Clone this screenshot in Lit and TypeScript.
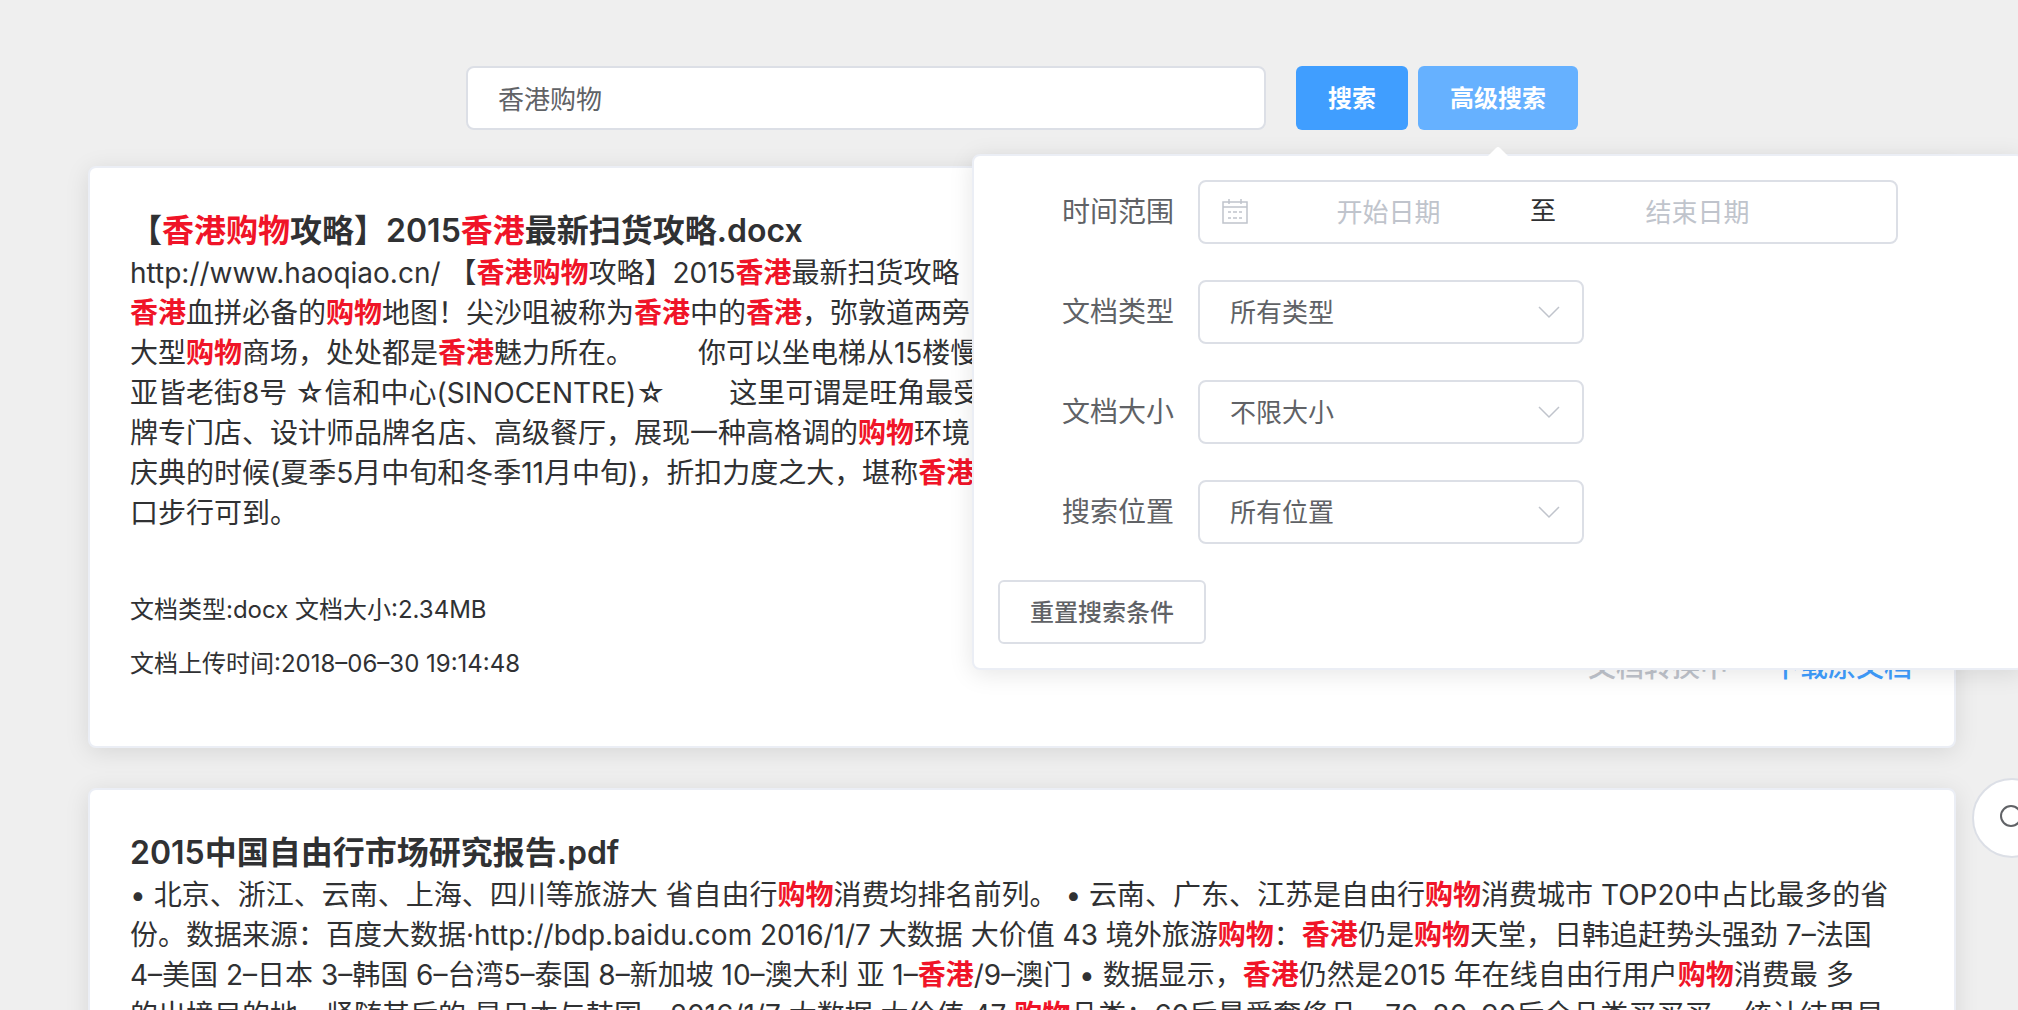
import { LitElement, html, css, nothing } from "lit";
import { customElement, property } from "lit/decorators.js";

const KEYWORDS = /(香港|购物)/;

interface Doc {
  title: string;
  lines: string[];
  meta?: { type: string; size: string; uploaded: string };
}

const DOCS: Doc[] = [
  {
    title: "【香港购物攻略】2015香港最新扫货攻略.docx",
    lines: [
      "http://www.haoqiao.cn/ 【香港购物攻略】2015香港最新扫货攻略",
      "香港血拼必备的购物地图！尖沙咀被称为香港中的香港，弥敦道两旁",
      "大型购物商场，处处都是香港魅力所在。 \u3000\u3000你可以坐电梯从15楼慢",
      "亚皆老街8号 ☆信和中心(SINOCENTRE)☆ \u3000\u3000这里可谓是旺角最受",
      "牌专门店、设计师品牌名店、高级餐厅，展现一种高格调的购物环境",
      "庆典的时候(夏季5月中旬和冬季11月中旬)，折扣力度之大，堪称香港",
      "口步行可到。",
    ],
    meta: { type: "docx", size: "2.34MB", uploaded: "2018–06–30 19:14:48" },
  },
  {
    title: "2015中国自由行市场研究报告.pdf",
    lines: [
      "• 北京、浙江、云南、上海、四川等旅游大 省自由行购物消费均排名前列。 • 云南、广东、江苏是自由行购物消费城市 TOP20中占比最多的省",
      "份。数据来源：百度大数据·http://bdp.baidu.com 2016/1/7 大数据 大价值 43 境外旅游购物：香港仍是购物天堂，日韩追赶势头强劲 7–法国",
      "4–美国 2–日本 3–韩国 6–台湾5–泰国 8–新加坡 10–澳大利 亚 1–香港/9–澳门 • 数据显示，香港仍然是2015 年在线自由行用户购物消费最 多",
      "的出境目的地，紧随其后的 是日本与韩国。2016/1/7 大数据 大价值 47 购物品类：60后最爱奢侈品，70–80–90后全品类买买买 • 统计结果显",
    ],
  },
];

const highlight = (text: string) =>
  text.split(KEYWORDS).map((part) => (KEYWORDS.test(part) ? html`<em class="hit">${part}</em>` : part));

@customElement("result-card")
class ResultCard extends LitElement {
  @property({ attribute: false }) doc!: Doc;

  static styles = css`
    :host {
      display: block;
      box-sizing: border-box;
      padding: 41px 40px 40px;
      border: 2px solid #ebeef5;
      border-radius: 8px;
      background: #fff;
      box-shadow: 0 4px 24px rgba(0, 0, 0, 0.1);
      color: #303133;
    }
    .title {
      margin: 0;
      font-size: 32px;
      line-height: 44px;
      font-weight: 600;
      white-space: nowrap;
    }
    .snippet {
      margin: 0;
      font-size: 28px;
      line-height: 40px;
    }
    .line {
      display: block;
      white-space: pre;
    }
    .hit {
      color: #f01428;
      font-style: normal;
      font-weight: 700;
    }
    .foot {
      display: flex;
      justify-content: space-between;
      align-items: flex-end;
      margin-top: 50px;
      padding: 0 2px 15px 0;
    }
    .meta {
      margin: 0;
      font-size: 24px;
      line-height: 54px;
    }
    .actions {
      display: flex;
      gap: 44px;
      font-size: 28px;
      line-height: 48px;
      font-weight: 500;
    }
    .pending {
      color: #c0c4cc;
    }
    .download {
      color: #409eff;
      text-decoration: none;
    }
  `;

  render() {
    const d = this.doc;
    return html`
      <h2 class="title">${highlight(d.title)}</h2>
      <p class="snippet">${d.lines.map((l) => html`<span class="line">${highlight(l)}</span>`)}</p>
      ${d.meta
        ? html`<div class="foot">
            <div>
              <p class="meta">文档类型:${d.meta.type} 文档大小:${d.meta.size}</p>
              <p class="meta">文档上传时间:${d.meta.uploaded}</p>
            </div>
            <div class="actions">
              <span class="pending">文档转换中</span>
              <a class="download" href="#">下载原文档</a>
            </div>
          </div>`
        : nothing}
    `;
  }
}

@customElement("advanced-panel")
class AdvancedPanel extends LitElement {
  static styles = css`
    :host {
      display: flex;
      flex-direction: column;
      gap: 36px;
      box-sizing: border-box;
      padding: 24px;
      border: 2px solid #ebeef5;
      border-radius: 8px;
      background: #fff;
      box-shadow: 0 4px 24px rgba(0, 0, 0, 0.1);
      color: #606266;
    }
    .arrow {
      position: absolute;
      left: 50%;
      top: -10px;
      width: 24px;
      height: 12px;
      margin-left: -12px;
      fill: #fff;
    }
    .row {
      display: flex;
      align-items: center;
    }
    .label {
      flex: none;
      box-sizing: border-box;
      width: 200px;
      padding-right: 24px;
      text-align: right;
      font-size: 28px;
      line-height: 64px;
    }
    .range,
    .select {
      box-sizing: border-box;
      height: 64px;
      border: 2px solid #dcdfe6;
      border-radius: 8px;
      background: #fff;
    }
    .range {
      flex: 0 1 700px;
      min-width: 0;
      display: flex;
      align-items: center;
      padding: 0 62px 0 20px;
      font-size: 26px;
    }
    .calendar {
      flex: none;
      width: 32px;
      height: 28px;
      fill: none;
      stroke: #c0c4cc;
      stroke-width: 1.5;
    }
    .date {
      flex: 1;
      width: 0;
      min-width: 0;
      box-sizing: border-box;
      height: 56px;
      padding: 0;
      border: 0;
      outline: 0;
      background: none;
      font: inherit;
      text-align: center;
      color: #606266;
    }
    .date::placeholder {
      color: #c0c4cc;
    }
    .to {
      flex: none;
      width: 36px;
      text-align: center;
      color: #303133;
      line-height: 60px;
      padding-bottom: 2px;
    }
    .picker {
      position: relative;
      flex: 0 1 386px;
    }
    .select {
      display: block;
      width: 100%;
      padding: 0 60px 0 30px;
      appearance: none;
      outline: 0;
      font: inherit;
      font-size: 26px;
      color: #606266;
    }
    .chevron {
      position: absolute;
      right: 23px;
      top: 25px;
      width: 24px;
      height: 14px;
      fill: none;
      stroke: #c0c4cc;
      stroke-width: 1.5;
      pointer-events: none;
    }
    .reset {
      align-self: flex-start;
      height: 64px;
      padding: 0 30px 4px;
      border: 2px solid #dcdfe6;
      border-radius: 6px;
      background: #fff;
      font: inherit;
      font-size: 24px;
      font-weight: 500;
      color: #606266;
    }
  `;

  private picker(id: string, label: string, value: string) {
    return html`
      <div class="row">
        <label class="label" for=${id}>${label}</label>
        <div class="picker">
          <select class="select" id=${id}>
            <option>${value}</option>
          </select>
          <svg class="chevron" viewBox="0 0 24 14" aria-hidden="true"><path d="M2 2 L12 12 L22 2" /></svg>
        </div>
      </div>
    `;
  }

  render() {
    return html`
      <svg class="arrow" viewBox="0 0 24 12" aria-hidden="true"><path d="M0 12 L10 2 Q12 0 14 2 L24 12 Z" /></svg>
      <div class="row">
        <label class="label" for="start">时间范围</label>
        <div class="range">
          <svg class="calendar" viewBox="0 0 32 28" aria-hidden="true">
            <path d="M3 4 H27 V25 H3 Z M3 9 H27 M9 1 V6 M21 1 V6" />
            <path d="M8 14 H11 M13 14 H17 M19 14 H22 M8 20 H11 M13 20 H17 M19 20 H22" />
          </svg>
          <input class="date" id="start" type="text" placeholder="开始日期" />
          <span class="to">至</span>
          <input class="date" type="text" aria-label="结束日期" placeholder="结束日期" />
        </div>
      </div>
      ${this.picker("type", "文档类型", "所有类型")} ${this.picker("size", "文档大小", "不限大小")}
      ${this.picker("place", "搜索位置", "所有位置")}
      <button class="reset" type="button">重置搜索条件</button>
    `;
  }
}

@customElement("app-root")
class AppRoot extends LitElement {
  static styles = css`
    :host {
      display: block;
      box-sizing: border-box;
      height: 100vh;
      overflow: hidden;
      padding: 66px 62px 0 88px;
      background: #efefef;
      font-family: Inter, "Noto Sans CJK SC", sans-serif;
      text-spacing-trim: space-all;
    }
    .search {
      display: flex;
      justify-content: center;
    }
    .query {
      flex: 0 1 800px;
      min-width: 0;
      box-sizing: border-box;
      height: 64px;
      margin-right: 30px;
      padding: 0 30px 2px;
      border: 2px solid #dcdfe6;
      border-radius: 8px;
      outline: 0;
      background: #fff;
      font: inherit;
      font-size: 26px;
      color: #606266;
    }
    .button {
      height: 64px;
      padding: 0 32px 4px;
      border: 0;
      border-radius: 6px;
      background: #409eff;
      font: inherit;
      font-size: 24px;
      font-weight: 700;
      color: #fff;
      white-space: nowrap;
    }
    .button.light {
      background: #66b1ff;
    }
    .advanced {
      position: relative;
      margin-left: 10px;
    }
    .panel {
      position: absolute;
      z-index: 2;
      top: 88px;
      left: 50%;
      width: 1052px;
      margin-left: -526px;
    }
    .results {
      display: flex;
      flex-direction: column;
      gap: 40px;
      margin-top: 36px;
    }
    .float {
      position: fixed;
      right: -34px;
      top: 778px;
      box-sizing: border-box;
      width: 80px;
      height: 80px;
      padding: 0;
      border: 2px solid #dcdfe6;
      border-radius: 50%;
      background: #fff;
    }
    .lens {
      display: block;
      width: 28px;
      height: 28px;
      margin: 0 auto;
      fill: none;
      stroke: #606266;
      stroke-width: 2;
    }
  `;

  render() {
    return html`
      <form class="search" lang="zh-CN" @submit=${(e: Event) => e.preventDefault()}>
        <input class="query" type="text" aria-label="搜索" .value=${"香港购物"} />
        <button class="button" type="submit">搜索</button>
        <div class="advanced">
          <button class="button light" type="button" aria-expanded="true">高级搜索</button>
          <advanced-panel class="panel"></advanced-panel>
        </div>
      </form>
      <main class="results" lang="zh-CN">
        ${DOCS.map((d) => html`<result-card .doc=${d}></result-card>`)}
      </main>
      <button class="float" type="button" aria-label="搜索">
        <svg class="lens" viewBox="0 0 28 28" aria-hidden="true">
          <circle cx="13" cy="12" r="10" />
          <path d="M20 19 L27 26" />
        </svg>
      </button>
    `;
  }
}
